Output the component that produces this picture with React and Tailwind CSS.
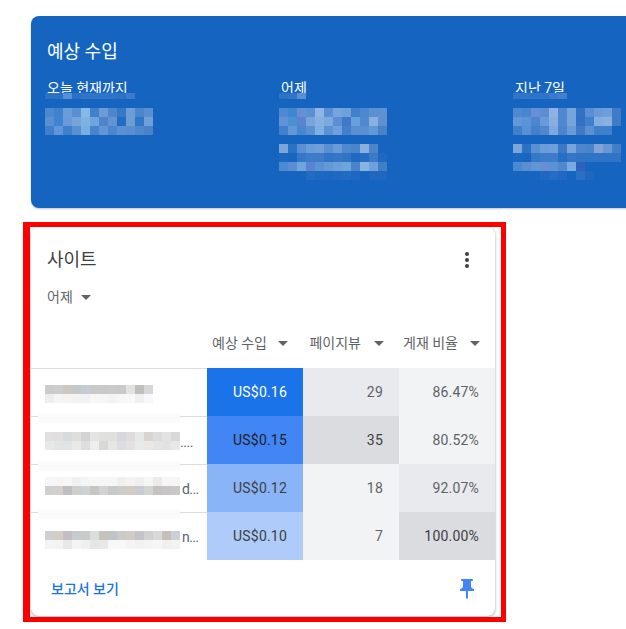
import React from "react";

const FONT = "font-['Roboto','Noto_Sans_CJK_KR',sans-serif]";

// pixelated blocks that hide the private values in the screenshot
function Mosaic({ rows, size = 9, height }) {
  return (
    <div className="flex flex-col">
      {rows.map((row, i) => (
        <div key={i} className="flex">
          {row.map((c, j) => (
            <div key={j} style={{ width: size, height: height || size, backgroundColor: c }} />
          ))}
        </div>
      ))}
    </div>
  );
}

const T = "#1565c0";

const todayBlocks = [
  ["#4b88cf", "#3f81cb", "#6d9dd8", "#5a8fd2", "#8ab8e5", "#4080cc", "#6d9bd6", "#4f85cb", "#3478c6", "#6e9dd6", "#4a85cd", "#5a8ed0"],
  ["#5a90d3", "#3f84d0", "#6a9bd8", "#7ba3db", "#7db2e3", "#6ea6dc", "#4f83cb", "#6393d4", "#1f6cc2", "#6e9dd6", "#3077c6", "#6f9fd8"],
  ["#3f7fcb", "#6196d5", "#3f80cc", "#5a8fd2", "#78aee0", "#4684cd", "#6096d5", "#4a85cd", "#5c90d0", "#5a8ed0", "#5088cc", "#4a82c8"],
];
const yesterdayBlocks = [
  ["#4f88d0", "#3f85d0", "#6590d6", "#5a8fd2", "#92b4e4", "#5a90d3", "#78a4dc", "#6ea0da", "#4080cc", "#4b88cf", "#5a8fd2", "#5f90d0"],
  ["#5f93d6", "#4a90d4", "#5a84d0", "#7ba3db", "#86afe2", "#7aaade", "#5a90d3", "#4078cc", "#68a0dc", "#4f8ad0", "#8ab0e0", "#6090d0"],
  ["#4080cc", "#6496d5", "#4588cf", "#5a8fd2", "#80b0e2", "#5a92d4", "#70a0da", "#4080cc", "#5a90d3", "#5a8fd2", "#5f9ad6", "#4a82c8"],
];
const yesterdaySub = [
  ["#7ba6da", "#2a72c6", "#5a8fd2", "#6a9cd8", "#6f9fd8", "#5a90d0", "#6a9bd4", "#4f88cc", "#4a85cc", "#88b0e0", "#4f85c8", T],
  ["#1a68c2", "#1866c0", "#3478c8", "#3c7ccb", "#3c7ccb", "#2f74c6", "#3476c8", "#3074c6", "#1d6ac2", "#256cc4", "#3a7ac8", "#1f68c0"],
  ["#4a8ad0", "#5a8ed0", "#70a4dc", "#5a84d0", "#5a92d4", "#6498d6", "#6a9fda", "#6ea3dc", "#4a85cc", "#88b4e4", "#70a0da", "#3f7fc4"],
  [T, T, T, "#1f6cc2", "#1f68c0", "#1a68c0", "#2068c2", "#206cc2", "#1f68c0", T, "#1f68c0", "#1f68c0"],
];
const weekBlocks = [
  ["#4f88d0", "#4a85d0", "#6590d6", "#5a8fd2", "#92b0e4", "#4f88d0", "#78a4dc", "#2f72c6", "#5a90d3", "#6a9bd8", "#6f9fd8", "#3f7cc8"],
  ["#6098d8", "#5a94d6", "#4f85cf", "#6a9bd8", "#8aaee2", "#4f88d0", "#78a4dc", "#3070c6", "#3f80cc", "#80aee0", "#8ab0e2", "#3f7cc8"],
  ["#3f7fcb", "#5a90d3", "#4080cc", "#5088d0", "#80a8e0", "#4a85cd", "#6a9ad8", "#4078c8", "#5a8fd2", "#3f7fcb", "#3f7fcb", T],
];
const weekSub = [
  ["#7ba6da", "#2a72c6", "#5a8fd2", "#6a9cd8", "#6f9fd8", "#3a78c8", "#78a4dc", "#4f85cc", "#4a85cc", "#80a4d8", "#6a96d4", "#3f7fc8"],
  ["#1a68c2", "#1866c0", "#3478c8", "#3c7ccb", "#3c7ccb", "#2470c4", "#3476c8", "#3074c6", "#3074c6", "#3074c6", "#3074c6", "#3074c6"],
  ["#4a8ad0", "#5a8ed0", "#5f96d4", "#6a8ed6", "#5a92d4", "#4f88cc", "#7aaade", "#2f62bc", T, T, T, T],
  [T, T, T, "#1f68c0", "#256cc4", "#2068c2", T, "#2a70c4", "#1f68c0", T, T, T],
];

const siteRows = [
  {
    tail: "",
    tailClass: "",
    blockClass: "mt-[16px]",
    pale: false,
    blocks: [
      ["#cbcbcb", "#cdcdcd", "#cdc7bf", "#c6c8c8", "#c5ccd3", "#c9c9c9", "#c9c9c9", "#cacaca", "#c9c9c9", "#e2e2e0", "#c0bebb", "#d4d6da"],
      ["#eeeeee", "#f4f5f6", "#f5f4f2", "#f2f2f2", "#f1f2f4", "#f7f7f7", "#f6f6f6", "#f4f4f4", "#f6f6f6", "#f8f8f8", "#f0f0f0", "#f8f8f8"],
    ],
    money: "US$0.16",
    moneyBg: "bg-[#1a73e8]",
    moneyText: "text-white",
    views: "29",
    viewsBg: "bg-[#e8eaed]",
    viewsText: "text-[#5f6368]",
    rate: "86.47%",
    rateBg: "bg-[#f1f3f4]",
    rateText: "text-[#5f6368]",
  },
  {
    tail: "....",
    tailClass: "pt-[3px] tracking-[-0.4px]",
    blockClass: "mt-[15px]",
    pale: true,
    blocks: [
      ["#e0e0e0", "#e0dfdd", "#d8dadc", "#dededc", "#d3d3d3", "#e2e4e6", "#e0e0de", "#e2e0de", "#d8d8da", "#dcdcdc", "#e6e8e8", "#d8d4d0", "#dcdcdc", "#e2e2e2", "#d8d8d8"],
      ["#e8e8e6", "#e2e4e6", "#e2e4e4", "#eaeaea", "#dedede", "#eeeeee", "#d8d8d8", "#e6e6e4", "#dcdde0", "#e2e0e2", "#e8eaea", "#ebe8e4", "#e4e4e6", "#e2e2e2", "#e8e8e8"],
    ],
    money: "US$0.15",
    moneyBg: "bg-[#4285f4]",
    moneyText: "text-[#202124]",
    views: "35",
    viewsBg: "bg-[#dadce0]",
    viewsText: "text-[#3c4043]",
    rate: "80.52%",
    rateBg: "bg-[#f1f3f4]",
    rateText: "text-[#5f6368]",
  },
  {
    tail: "d...",
    tailClass: "pl-[2px] tracking-[-0.6px]",
    blockClass: "mt-[12px]",
    pale: true,
    blocks: [
      ["#f6f6f6", "#f6f5f5", "#f6f6f6", "#f0f1f1", "#f4f4f4", "#f6f6f6", "#f6f6f6", "#f6f6f6", "#f0f0f0", "#f4f3f2", "#f0f0f0", "#f6f6f6", "#ebebeb", "#f6f6f6", "#f6f6f6"],
      ["#cfcfcf", "#d3cfca", "#bfbdc2", "#cfcfcc", "#cdd2d4", "#c8c6c4", "#d2d2d2", "#c8c8c8", "#cccccc", "#d2cbc4", "#c8ccd2", "#d2d4d2", "#c4c2c0", "#c6c4c4", "#c8c8c8"],
    ],
    money: "US$0.12",
    moneyBg: "bg-[#8ab4f8]",
    moneyText: "text-[#3c4043]",
    views: "18",
    viewsBg: "bg-[#f1f3f4]",
    viewsText: "text-[#5f6368]",
    rate: "92.07%",
    rateBg: "bg-[#e8eaed]",
    rateText: "text-[#5f6368]",
  },
  {
    tail: "n...",
    tailClass: "pl-[2px] tracking-[-0.6px]",
    blockClass: "mt-[18px]",
    pale: true,
    blocks: [
      ["#cfcfcf", "#d2cdc6", "#c2bec2", "#c6cbcf", "#c8cacc", "#dcdcdc", "#c6c2bc", "#c0c4c8", "#cacaca", "#cfcbc6", "#c4c4c8", "#d0d0d0", "#d8dada", "#c6c0bc", "#ccd0d4"],
      ["#f4f4f4", "#f5f3f0", "#e8e8ec", "#f4f4f4", "#f0f0ee", "#e4e6e8", "#e8e8ea", "#f8f8f8", "#f8f8f8", "#f4f4f4", "#f2f2f2", "#f4f4f4", "#f6f6f6", "#f0f0f0", "#f2f2f2"],
    ],
    money: "US$0.10",
    moneyBg: "bg-[#aecbfa]",
    moneyText: "text-[#3c4043]",
    views: "7",
    viewsBg: "bg-[#f1f3f4]",
    viewsText: "text-[#5f6368]",
    rate: "100.00%",
    rateBg: "bg-[#dadce0]",
    rateText: "text-[#3c4043]",
  },
];

function Caret({ className = "" }) {
  return <span className={`inline-block w-0 h-0 border-x-[5px] border-x-transparent border-t-[5px] border-t-[#5f6368] ${className}`} />;
}

function LabelStrip({ label, cells }) {
  return (
    <div className="relative h-[21px] pl-[2px] text-sm leading-[21px] text-white">
      {label}
      <div className="absolute left-0 top-[15px]">
        <Mosaic rows={[cells]} height={6} />
      </div>
    </div>
  );
}

function EarningsCard() {
  const columns = [
    { label: "오늘 현재까지", strip: ["#2a72c4", "#2a72c4", "#5a8fd2", "#2a70c4", "#2f74c6", "#2f74c6", "#2f74c6", "#2f74c6", "#2c72c4", "#3a7ac8"], main: todayBlocks },
    { label: "어제", strip: ["#2a72c4", "#3176c6", "#5a8fd2"], main: yesterdayBlocks, sub: yesterdaySub },
    { label: "지난 7일", strip: ["#2f74c6", "#3076c6", "#2f74c6", "#2f74c6", "#3a7ac8", "#4080cc"], main: weekBlocks, sub: weekSub },
  ];
  return (
    <div className="ml-[31px] mt-4 h-[192px] w-[620px] shrink-0 rounded-lg bg-[#1565c0] pl-[14px] pt-[24px] shadow-[0_1px_2px_rgba(60,64,67,0.3)]">
      <div className="pl-[2px] text-lg leading-[24px] text-white">예상 수입</div>
      <div className="mt-[14px] grid grid-cols-[234px_234px_1fr]">
        {columns.map((c) => (
          <div key={c.label}>
            <LabelStrip label={c.label} cells={c.strip} />
            <div className="mt-[9px]">
              <Mosaic rows={c.main} />
            </div>
            {c.sub ? (
              <div className="mt-[9px]">
                <Mosaic rows={c.sub} />
              </div>
            ) : null}
          </div>
        ))}
      </div>
    </div>
  );
}

function HeaderCell({ label, caretClass = "ml-[11px]" }) {
  return (
    <div className="flex h-full items-center justify-end pr-[15px] text-sm text-[#5f6368]">
      <span>{label}</span>
      <Caret className={caretClass} />
    </div>
  );
}

function SitesCard() {
  return (
    <div className="relative flex h-[389px] w-[464px] flex-col rounded-lg bg-white shadow-[0_1px_2px_rgba(60,64,67,0.3),0_1px_3px_1px_rgba(60,64,67,0.15)]">
      <div className="flex items-center justify-between pl-4 pr-[26px] pt-[21px]">
        <span className="text-lg leading-[24px] text-[#3c4043]">사이트</span>
        <span className="flex flex-col gap-[2px]">
          <i className="size-[4px] rounded-full bg-[#3c4043]" />
          <i className="size-[4px] rounded-full bg-[#3c4043]" />
          <i className="size-[4px] rounded-full bg-[#3c4043]" />
        </span>
      </div>
      <div className="mt-[15px] flex items-center gap-[8px] pl-4 text-sm leading-[21px] text-[#5f6368]">
        어제
        <Caret />
      </div>
      <div className="mt-[10px] grid h-[50px] grid-cols-[176px_96px_96px_96px]">
        <div />
        <HeaderCell label="예상 수입" />
        <HeaderCell label="페이지뷰" caretClass="ml-[13px]" />
        <HeaderCell label="게재 비율" caretClass="ml-[12px]" />
      </div>
      {siteRows.map((r) => (
        <div key={r.money} className="grid h-12 grid-cols-[176px_96px_96px_96px] text-sm tracking-[0.2px]">
          <div className="relative flex border-t border-[#dadce0] pl-[14px] text-[#5f6368]">
            <div className={`self-start ${r.blockClass}`}>
              <Mosaic rows={r.blocks} />
            </div>
            {r.tail ? <span className={`self-center ${r.tailClass}`}>{r.tail}</span> : null}
            {r.pale ? <div className="absolute left-[7px] top-[-3px] h-[9px] w-[142px] bg-[#fafafa]" /> : null}
          </div>
          <div className={`flex items-center justify-end pr-4 ${r.moneyBg} ${r.moneyText}`}>{r.money}</div>
          <div className={`flex items-center justify-end pr-4 ${r.viewsBg} ${r.viewsText}`}>{r.views}</div>
          <div className={`flex items-center justify-end pr-4 ${r.rateBg} ${r.rateText}`}>{r.rate}</div>
        </div>
      ))}
      <div className="flex flex-1 items-center justify-between pl-5 pr-4 pt-[2px]">
        <span className="text-sm font-medium text-[#1a73e8]">보고서 보기</span>
        <svg width="24" height="24" viewBox="0 0 24 24" fill="#4285f4">
          <path d="M16 9V4h1c.55 0 1-.45 1-1s-.45-1-1-1H7c-.55 0-1 .45-1 1s.45 1 1 1h1v5c0 1.66-1.34 3-3 3v2h5.97v7l1 1 1-1v-7H19v-2c-1.66 0-3-1.34-3-3z" />
        </svg>
      </div>
    </div>
  );
}

export default function App() {
  return (
    <div className={`flex h-[629px] w-[626px] flex-col overflow-hidden bg-white ${FONT}`}>
      <EarningsCard />
      <div className="ml-[23px] mt-[14px] h-[400px] w-[483px] shrink-0 border-y-[5px] border-l-[7px] border-r-[5px] border-[#fe0000] pl-px">
        <SitesCard />
      </div>
    </div>
  );
}
